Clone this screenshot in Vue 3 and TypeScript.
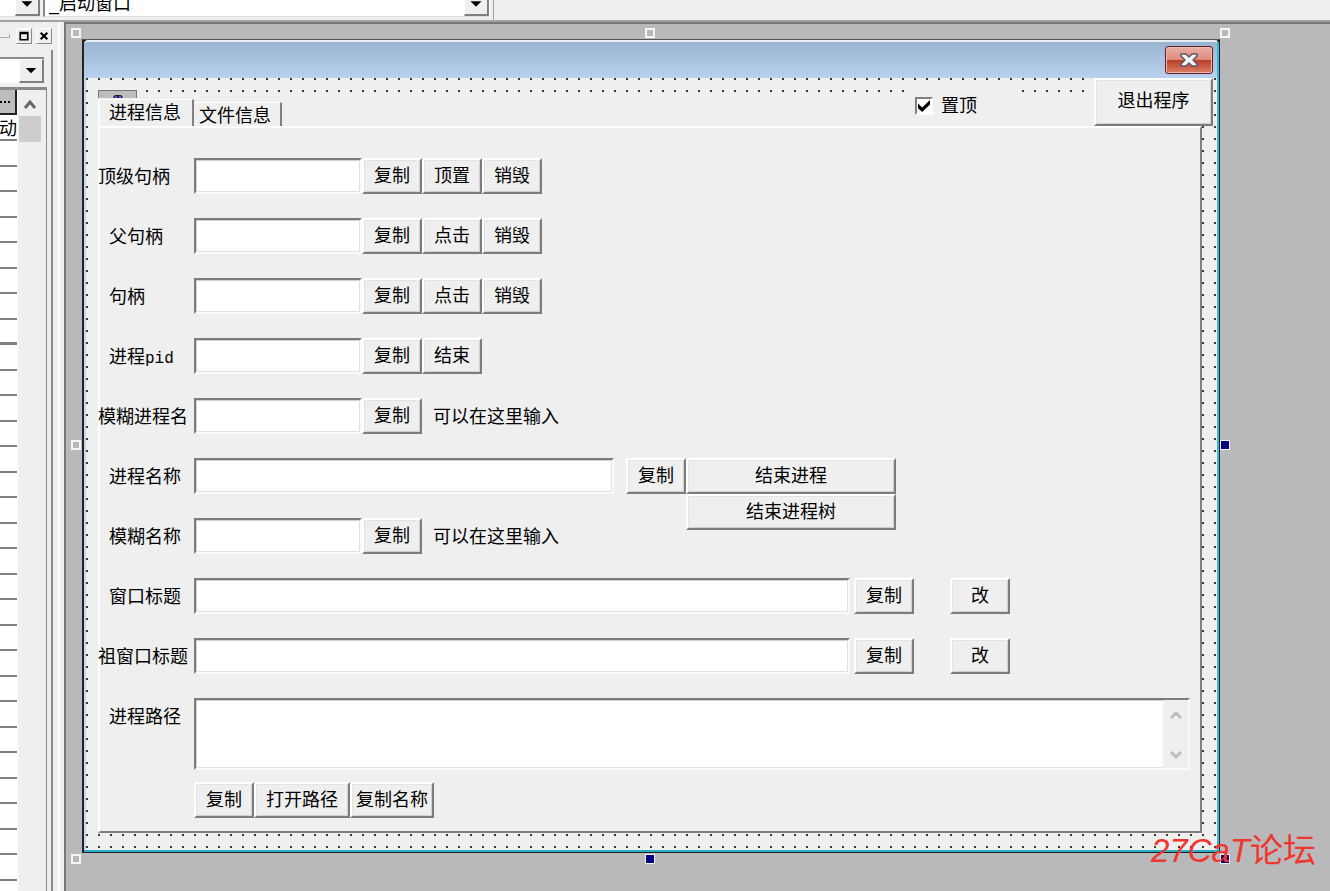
<script setup lang="ts">
import { ref } from 'vue'

interface Action {
  text: string
  gap?: boolean
}
interface FieldRow {
  id: string
  label: string
  latin?: string
  flush?: boolean
  size: 'short' | 'medium' | 'long'
  actions: Action[]
  stacked?: string[]
  note?: string
}

const copy: Action = { text: '复制' }
const rows: FieldRow[] = [
  { id: 'top', label: '顶级句柄', flush: true, size: 'short', actions: [copy, { text: '顶置' }, { text: '销毁' }] },
  { id: 'parent', label: '父句柄', size: 'short', actions: [copy, { text: '点击' }, { text: '销毁' }] },
  { id: 'handle', label: '句柄', size: 'short', actions: [copy, { text: '点击' }, { text: '销毁' }] },
  { id: 'pid', label: '进程', latin: 'pid', size: 'short', actions: [copy, { text: '结束' }] },
  { id: 'fuzzy-proc', label: '模糊进程名', flush: true, size: 'short', actions: [copy], note: '可以在这里输入' },
  { id: 'proc', label: '进程名称', size: 'medium', actions: [copy], stacked: ['结束进程', '结束进程树'] },
  { id: 'fuzzy-name', label: '模糊名称', size: 'short', actions: [copy], note: '可以在这里输入' },
  { id: 'title', label: '窗口标题', size: 'long', actions: [copy, { text: '改', gap: true }] },
  { id: 'root-title', label: '祖窗口标题', flush: true, size: 'long', actions: [copy, { text: '改', gap: true }] },
]

const handles = ['nw', 'n', 'ne', 'w', 'e active', 'sw', 's active', 'se active']
const onTop = ref(true)
const path = ref('')
const values = ref<Record<string, string>>({})
</script>

<template>
  <div class="ide">
    <header class="toolbar">
      <div class="picker first">
        <select aria-label="对象"><option></option></select>
        <svg class="arrow" viewBox="0 0 24 24"><path d="M6 10h12l-6 6z" /></svg>
      </div>
      <div class="picker second">
        <select aria-label="窗口"><option>_启动窗口</option></select>
        <svg class="arrow" viewBox="0 0 24 24"><path d="M6 10h12l-6 6z" /></svg>
      </div>
      <div class="toolbar-end"></div>
    </header>

    <div class="body">
      <aside class="side">
        <div class="side-title">
          <span class="grip"></span>
          <button class="mini" aria-label="最大化">
            <svg viewBox="0 0 12 12"><path d="M1.5 2h9v8.500h-9zM1 3h10" fill="none" stroke="#000" stroke-width="2" /></svg>
          </button>
          <button class="mini" aria-label="关闭面板">
            <svg viewBox="0 0 12 12"><path d="M2 2l8 8M10 2l-8 8" fill="none" stroke="#000" stroke-width="2.500" /></svg>
          </button>
        </div>
        <div class="side-frame">
          <div class="picker side-picker">
            <select aria-label="组件"><option></option></select>
            <svg class="arrow" viewBox="0 0 24 24"><path d="M6 9h12l-6 6z" /></svg>
          </div>
          <div class="props">
            <div class="cells">
              <button class="more" aria-label="更多">
                <svg viewBox="0 0 15 23"><path d="M0 11h2v2H0zM4 11h2v2H4zM8 11h2v2H8z" /></svg>
              </button>
              <div class="cell named">动</div>
              <div v-for="n in 30" :key="n" class="cell" :class="{ thick: n === 8 }"></div>
            </div>
            <div class="side-scroll">
              <svg viewBox="0 0 22 26"><path d="M6 18l5-6 5 6" fill="none" stroke="#666" stroke-width="3" /></svg>
              <div class="thumb"></div>
            </div>
          </div>
        </div>
      </aside>

      <main class="workspace">
        <div class="designer">
          <i v-for="h in handles" :key="h" class="handle" :class="h"></i>
          <section class="window">
            <div class="titlebar">
              <button class="close" aria-label="关闭">
                <svg viewBox="0 0 18 14">
                  <path d="M1 1h5l3 3 3-3h5v2l-4 4 4 4v2h-5l-3-3-3 3H1v-2l4-4-4-4z" fill="#f4f4f4" stroke="#5b5566" stroke-width="1.500" stroke-linejoin="round" />
                </svg>
              </button>
            </div>
            <div class="client">
              <div class="head">
                <div class="strip">
                  <div class="component">
                    <svg viewBox="0 0 12 6"><path d="M1 3l2-2h6l2 2-2 2H3z" fill="#222" /><path d="M3 3h2M7 3h2" stroke="#55f" stroke-width="2" /></svg>
                  </div>
                  <div class="tabs" role="tablist">
                    <button class="tab selected" role="tab" aria-selected="true">进程信息</button>
                    <button class="tab" role="tab" aria-selected="false">文件信息</button>
                  </div>
                </div>
                <label class="check"><input v-model="onTop" type="checkbox" /><span>置顶</span></label>
                <button class="btn exit">退出程序</button>
              </div>

              <form class="page" @submit.prevent>
                <div v-for="r in rows" :key="r.id" class="row">
                  <label class="label" :class="{ flush: r.flush }" :for="r.id">{{ r.label }}<span v-if="r.latin" class="latin">{{ r.latin }}</span></label>
                  <input :id="r.id" v-model="values[r.id]" type="text" class="field" :class="r.size" />
                  <button v-for="a in r.actions" :key="a.text" type="button" class="btn" :class="{ gap: a.gap }">{{ a.text }}</button>
                  <div v-if="r.stacked" class="stack">
                    <button v-for="s in r.stacked" :key="s" type="button" class="btn">{{ s }}</button>
                  </div>
                  <span v-if="r.note" class="note">{{ r.note }}</span>
                </div>
                <div class="row path-row">
                  <label class="label" for="path">进程路径</label>
                  <div class="area">
                    <textarea id="path" v-model="path"></textarea>
                    <div class="area-scroll">
                      <svg viewBox="0 0 12 10"><path d="M1 8l5-5 5 5" /></svg>
                      <svg viewBox="0 0 12 10"><path d="M1 2l5 5 5-5" /></svg>
                    </div>
                  </div>
                </div>
                <div class="footer">
                  <button type="button" class="btn">复制</button>
                  <button type="button" class="btn open">打开路径</button>
                  <button type="button" class="btn names">复制名称</button>
                </div>
              </form>
            </div>
          </section>
        </div>
      </main>
    </div>
    <div class="watermark"><em>27CaT</em>论坛</div>
  </div>
</template>

<style>
body {
  margin: 0;
  overflow: hidden;
}
</style>

<style scoped>
* {
  box-sizing: border-box;
}
.ide {
  position: relative;
  display: flex;
  flex-direction: column;
  height: 100vh;
  overflow: hidden;
  background: #efefef;
  color: #000;
  font: 18px/24px "Liberation Sans", "Noto Sans CJK SC", sans-serif;
}
button, input, select, textarea {
  margin: 0;
  padding: 0;
  border: 0;
  border-radius: 0;
  outline: 0;
  font: inherit;
  color: inherit;
  appearance: none;
}
svg {
  display: block;
}

.toolbar {
  display: flex;
  align-items: flex-end;
  flex: none;
  height: 22px;
  overflow: hidden;
  border-bottom: 2px solid #a2a2a2;
}
.picker {
  display: flex;
  flex: none;
  background: #fff;
}
.toolbar .picker {
  height: 26px;
  margin-bottom: 3px;
  border-bottom: 1px solid #dedede;
}
.picker select {
  flex: 1;
  min-width: 0;
  background: #fff;
}
.arrow {
  flex: none;
  width: 25px;
  height: 100%;
  background: #efefef;
  border: 1px solid #fff;
  border-right: 2px solid #808080;
  border-bottom: 2px solid #808080;
}
.first {
  width: 40px;
}
.second {
  width: 447px;
  margin-left: 3px;
  border-left: 2px solid #8a8a8a;
  border-right: 1px solid #fff;
}
.second select {
  padding-left: 4px;
}
.toolbar-end {
  width: 4px;
  height: 22px;
  border-right: 1px solid #a0a0a0;
}

.body {
  display: flex;
  flex: 1;
  min-height: 0;
}
.side {
  display: flex;
  flex-direction: column;
  flex: none;
  width: 64px;
  border-right: 4px solid #efefef;
  box-shadow: inset -2px 0 #fff;
}
.side-title {
  display: flex;
  align-items: center;
  gap: 4px;
  flex: none;
  height: 28px;
}
.grip {
  width: 10px;
  height: 4px;
  margin-right: 2px;
  border: 1px solid #aaa;
  border-width: 0 1px 1px 0;
}
.mini {
  width: 16px;
  height: 16px;
  padding: 2px;
  background: #efefef;
  border: 1px solid #fff;
  border-right-color: #8a8a8a;
  border-bottom-color: #8a8a8a;
}
.mini svg {
  width: 10px;
  height: 10px;
}
.side-frame {
  display: flex;
  flex-direction: column;
  flex: 1;
  min-height: 0;
  width: 53px;
  padding-top: 7px;
  border-right: 2px solid #8a8a8a;
}
.side-picker {
  width: 44px;
  height: 26px;
  border-top: 2px solid #8a8a8a;
}
.props {
  display: flex;
  flex: 1;
  min-height: 0;
  width: 47px;
  margin-top: 4px;
  border-top: 3px solid #8a8a8a;
  border-right: 1px solid #8a8a8a;
  overflow: hidden;
}
.cells {
  width: 19px;
  background: linear-gradient(90deg, #fff 18px, #efefef 18px);
}
.more {
  display: block;
  width: 17px;
  height: 25px;
  background: #bdbdbd;
  border-right: 2px solid #222;
  border-bottom: 2px solid #222;
  overflow: hidden;
}
.more svg {
  width: 15px;
  height: 23px;
}
.cell {
  width: 17px;
  height: 25px;
  border-bottom: 2px solid #808080;
  overflow: hidden;
}
.cell:nth-child(odd) {
  height: 26px;
}
.cell.thick {
  border-bottom-width: 3px;
}
.named {
  display: flex;
  justify-content: flex-end;
  height: 26px;
  line-height: 28px;
}
.side-scroll {
  width: 22px;
}
.side-scroll svg {
  width: 22px;
  height: 26px;
}
.thumb {
  height: 26px;
  background: #cdcdcd;
}

.workspace {
  flex: 1;
  min-width: 0;
  padding: 15px 110px 0 16px;
  background: #b9b9bb;
  border: 2px solid #777;
  border-width: 2px 0 0 2px;
}
.designer {
  position: relative;
}
.handle {
  position: absolute;
  width: 10px;
  height: 10px;
  border: 2px solid #f5f5f5;
}
.active {
  background: #000080;
  border-width: 1px;
}
.nw, .n, .ne { top: -11px; }
.w, .e { top: calc(50% - 6px); }
.sw, .s, .se { bottom: -11px; }
.nw, .w, .sw { left: -11px; }
.n, .s { left: calc(50% - 6px); }
.ne, .e, .se { right: -10px; }

.window {
  background: #000;
  border: 1px solid #222;
  border-left-width: 2px;
  border-top-color: #555;
}
.titlebar {
  display: flex;
  justify-content: flex-end;
  height: 38px;
  padding: 4px 4px 0 0;
  border-top: 2px solid #e8eef2;
  border-right: 2px solid #36b9dc;
  border-radius: 4px 4px 0 0;
  background: linear-gradient(#99b4d1, #b9d1ec);
}
.close {
  display: flex;
  align-items: center;
  justify-content: center;
  width: 48px;
  height: 28px;
  border: 1px solid #5d2230;
  border-radius: 3px;
  box-shadow: inset 0 0 0 1px #f0b8aa;
  background: linear-gradient(#eab0a4, #dc8c7c 48%, #b93c24 50%, #d9806a);
}
.close svg {
  width: 18px;
  height: 14px;
}
.client {
  padding-left: 14px;
  padding-bottom: 17px;
  border-right: 2px solid #36b9dc;
  border-bottom: 2px solid #26afc8;
  box-shadow: inset 2px 0 #c3d8ee;
  background:
    linear-gradient(90deg, transparent 2px, #efefef 2px) 2px 0 / 12px 12px,
    linear-gradient(#3c3c3c 2px, #efefef 2px) 2px 0 / 12px 12px;
}
.head {
  display: flex;
  height: 48px;
  margin-right: 4px;
  background: linear-gradient(#efefef, #efefef) 0 20px / calc(100% - 12px) 100% no-repeat;
}
.strip {
  flex: 1;
  padding-top: 12px;
}
.component {
  width: 39px;
  height: 8px;
  padding-top: 3px;
  border: 1px solid #777;
  border-bottom: 0;
  background: #bdbdbd;
  overflow: hidden;
}
.component svg {
  width: 12px;
  height: 6px;
  margin: 0 auto;
}
.tabs {
  display: flex;
  align-items: flex-end;
  height: 28px;
}
.tab {
  height: 24px;
  width: 88px;
  padding: 2px 0 0 5px;
  background: #efefef;
  border-top: 1px solid #fff;
  border-right: 2px solid #808080;
  line-height: 22px;
  text-align: left;
  white-space: nowrap;
}
.tab.selected {
  width: 96px;
  height: 27px;
  padding: 0 0 0 9px;
  border-left: 2px solid #fff;
  border-radius: 3px 0 0 0;
  line-height: 24px;
}
.check {
  display: flex;
  align-items: center;
  gap: 8px;
  width: 112px;
  height: 36px;
  margin: 10px 75px 0 0;
  padding-left: 8px;
  background: #efefef;
}
.check input {
  display: grid;
  place-items: center;
  width: 18px;
  height: 18px;
  background: #fff;
  border: 2px solid #808080;
  border-right-color: #fff;
  border-bottom-color: #fff;
}
.check input:checked::before {
  content: "";
  width: 12px;
  height: 12px;
  background: #000;
  clip-path: polygon(0 30%, 35% 62%, 100% 0, 100% 38%, 35% 100%, 0 68%);
}
.btn {
  flex: none;
  width: 60px;
  height: 36px;
  background: #efefef;
  border: 2px solid #fff;
  border-right-color: #7c7c7c;
  border-bottom-color: #7c7c7c;
  box-shadow: inset 1px 1px #e3e3e3, inset -1px -1px #d0d0d0;
  line-height: 24px;
  text-align: center;
  white-space: nowrap;
}
.exit {
  width: 119px;
  height: 48px;
  padding-bottom: 2px;
}
.page {
  margin-right: 15px;
  padding: 30px 0 13px;
  background: #efefef;
  border: 2px solid #fff;
  border-right: 2px solid #808080;
  border-bottom: 2px solid #808080;
}
.row {
  display: flex;
  align-items: flex-start;
  height: 36px;
  margin-bottom: 24px;
}
.label {
  flex: none;
  width: 94px;
  padding-left: 9px;
  line-height: 38px;
  white-space: nowrap;
}
.label.flush {
  margin-left: -2px;
  width: 96px;
  padding-left: 0;
}
.latin {
  font-family: "Liberation Mono", monospace;
  font-size: 16px;
}
.field, .area {
  background: #fff;
  border: 2px solid #fafafa;
  border-top-color: #7c7c7c;
  border-left-color: #7c7c7c;
  box-shadow: inset -1px -1px #e0e0e0, inset 1px 1px #cfcfcf;
}
.field {
  flex: none;
  height: 36px;
}
.short { width: 168px; }
.medium { width: 420px; margin-right: 12px; }
.long { width: 656px; margin-right: 4px; }
.gap {
  margin-left: 36px;
}
.stack {
  display: flex;
  flex-direction: column;
}
.stack .btn {
  width: 210px;
}
.note {
  margin-left: 11px;
  line-height: 38px;
}
.path-row {
  height: 72px;
  margin-bottom: 12px;
}
.area {
  display: flex;
  flex: 1;
  height: 72px;
  margin-right: 10px;
}
.area textarea {
  flex: 1;
  min-width: 0;
  background: transparent;
  resize: none;
}
.area-scroll {
  display: flex;
  flex-direction: column;
  justify-content: space-between;
  align-items: center;
  width: 25px;
  padding: 10px 0 8px;
  background: #efefef;
}
.area-scroll svg {
  width: 12px;
  height: 10px;
  fill: none;
  stroke: #bdbdbd;
  stroke-width: 3px;
}
.footer {
  display: flex;
  padding-left: 94px;
}
.open { width: 96px; }
.names { width: 84px; }
.watermark {
  position: absolute;
  right: 14px;
  bottom: 20px;
  color: #ef372f;
  font-size: 33px;
  line-height: 40px;
}
</style>
